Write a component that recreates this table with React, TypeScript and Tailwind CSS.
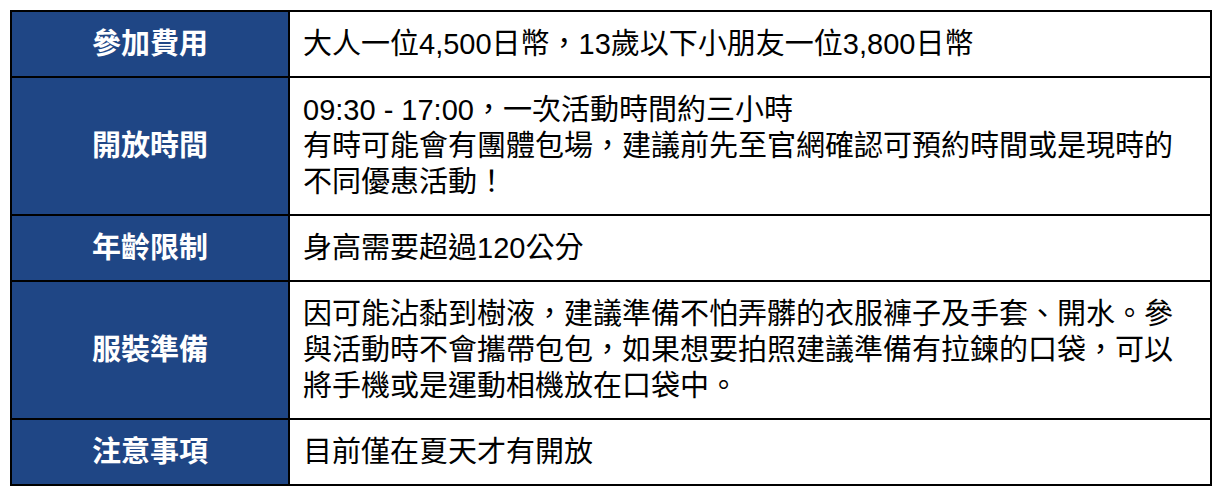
const ROWS: { label: string; lines: string[] }[] = [
  { label: "參加費用", lines: ["大人一位4,500日幣，13歲以下小朋友一位3,800日幣"] },
  {
    label: "開放時間",
    lines: [
      "09:30 - 17:00，一次活動時間約三小時",
      "有時可能會有團體包場，建議前先至官網確認可預約時間或是現時的不同優惠活動！",
    ],
  },
  { label: "年齡限制", lines: ["身高需要超過120公分"] },
  {
    label: "服裝準備",
    lines: [
      "因可能沾黏到樹液，建議準備不怕弄髒的衣服褲子及手套、開水。參與活動時不會攜帶包包，如果想要拍照建議準備有拉鍊的口袋，可以將手機或是運動相機放在口袋中。",
    ],
  },
  { label: "注意事項", lines: ["目前僅在夏天才有開放"] },
];

export default function App() {
  return (
    <div className="min-h-[500px] w-[1224px] bg-white pl-[10px] pt-[10px] font-['Liberation_Sans','Noto_Sans_CJK_TC',sans-serif]">
      <div className="w-[1202px] border-2 border-black">
        {ROWS.map((row, i) => (
          <div
            key={row.label}
            className={`flex ${i > 0 ? "border-t-2 border-black" : ""}`}
          >
            <div className="flex w-[278px] shrink-0 items-center justify-center border-r-2 border-black bg-[#1f4685] text-[29px] font-bold leading-[36px] text-white">
              {row.label}
            </div>
            <div className="flex-1 py-[14px] pl-[13px] pr-[12px] text-[29px] leading-[36px] text-black">
              {row.lines.map((line) => (
                <div key={line}>{line}</div>
              ))}
            </div>
          </div>
        ))}
      </div>
    </div>
  );
}
